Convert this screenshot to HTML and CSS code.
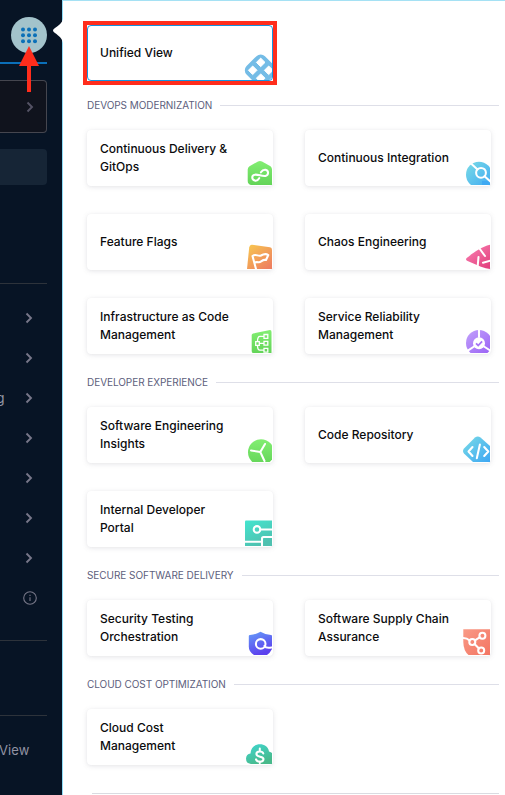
FILE: index.html
```
<!DOCTYPE html>
<html lang="en">
<head>
<meta charset="utf-8">
<title>Modules</title>
<link rel="stylesheet" href="styles.css">
</head>
<body>
<div class="app">
  <aside class="sidebar">
    <div class="launcher">
      <svg width="36" height="36" viewBox="0 0 36 36"><circle cx="18" cy="18" r="18" fill="#a3c3cb"/><g fill="#0b70b8"><circle cx="12" cy="12.5" r="2"/><circle cx="18" cy="12.5" r="2"/><circle cx="24" cy="12.5" r="2"/><circle cx="12" cy="18.3" r="2"/><circle cx="18" cy="18.3" r="2"/><circle cx="24" cy="18.3" r="2"/><circle cx="12" cy="24.2" r="2"/><circle cx="18" cy="24.2" r="2"/><circle cx="24" cy="24.2" r="2"/></g></svg>
    </div>
    <div class="project"><svg class="chev" viewBox="0 0 8 12"><path d="M1.5 1.5 6 6 1.5 10.5"/></svg></div>
    <div class="active"></div>
    <nav class="nav">
      <div class="item"><svg class="chev" viewBox="0 0 8 12"><path d="M1.5 1.5 6 6 1.5 10.5"/></svg></div>
      <div class="item"><svg class="chev" viewBox="0 0 8 12"><path d="M1.5 1.5 6 6 1.5 10.5"/></svg></div>
      <div class="item"><span class="label">g</span><svg class="chev" viewBox="0 0 8 12"><path d="M1.5 1.5 6 6 1.5 10.5"/></svg></div>
      <div class="item"><svg class="chev" viewBox="0 0 8 12"><path d="M1.5 1.5 6 6 1.5 10.5"/></svg></div>
      <div class="item"><svg class="chev" viewBox="0 0 8 12"><path d="M1.5 1.5 6 6 1.5 10.5"/></svg></div>
      <div class="item"><svg class="chev" viewBox="0 0 8 12"><path d="M1.5 1.5 6 6 1.5 10.5"/></svg></div>
      <div class="item"><svg class="chev" viewBox="0 0 8 12"><path d="M1.5 1.5 6 6 1.5 10.5"/></svg></div>
      <div class="item"><svg class="info" viewBox="0 0 14 14"><circle cx="7" cy="7" r="6.3"/><path d="M7 6.2V10M7 3.8V5"/></svg></div>
    </nav>
    <div class="blank"></div>
    <div class="view"><span>View</span></div>
    <svg class="arrow" viewBox="0 0 20 46"><path d="M10 0 20 20H12V46H8V20H0Z" fill="#ff2d1c"/></svg>
    <svg class="notch" viewBox="0 0 11 24"><path d="M11 0C10 4 7 6 3 9Q-1 11.500 3 14C7 17 10 19 11 24Z" fill="#fff"/></svg>
  </aside>
  <main class="panel">
    <div class="card unified"><span>Unified View</span>
      <svg class="icon" viewBox="0 0 29 29"><rect x="4.700" y="6.300" width="26" height="26" rx="6" transform="rotate(45 17.700 19.300)" fill="#74bce6"/><g fill="#fff" stroke="#fff" stroke-width="1" stroke-linejoin="round"><path d="m17.700 7.100 4.300 4.300-4.300 4.300-4.300-4.300ZM9.700 15l4.300 4.300-4.300 4.300-4.300-4.300ZM25.700 15l4.300 4.300-4.300 4.300-4.300-4.300ZM17.700 22.900l4.300 4.300-4.300 4.300-4.300-4.300Z"/></g></svg>
    </div>

    <h2 class="heading">DEVOPS MODERNIZATION</h2>
    <section class="grid">
      <div class="card"><span>Continuous Delivery &amp;<br>GitOps</span>
        <svg class="icon" viewBox="0 0 29 29"><defs><linearGradient id="green" x2="0" y2="1"><stop stop-color="#82ee72"/><stop offset="1" stop-color="#63d458"/></linearGradient></defs><path d="M15 5.500Q17 4.300 19 5.500L27.500 10.200Q29 11.500 29 13.500V29H8Q4.700 28 4.700 25V13.500Q4.700 11.500 6.500 10.200Z" fill="url(#green)"/><path class="line" d="M16.200 22.200C14.800 24.500 13.200 25 11.800 24.600 8.500 23.800 8.400 19.300 11.700 18.700 15 18 19 20.600 22.500 19.900 26 19 25.800 14.300 22.500 13.700 20.300 13.400 19 14.600 17.900 16.300"/></svg></div>
      <div class="card"><span>Continuous Integration</span>
        <svg class="icon" viewBox="0 0 29 29"><defs><linearGradient id="blue" x2="1" y2="1"><stop stop-color="#7adce6"/><stop offset="1" stop-color="#3ea7f3"/></linearGradient></defs><circle cx="18" cy="18.700" r="13" fill="url(#blue)"/><path d="M21 25H29V29H21Z" fill="#3fa9f2"/><circle class="line" cx="20" cy="16.800" r="4.900"/><path class="line" d="M10 7.500 16.500 13.500M23.500 20.200 30 26"/></svg></div>
      <div class="card"><span>Feature Flags</span>
        <svg class="icon" viewBox="0 0 29 29"><defs><linearGradient id="orange" x2=".8" y2="1"><stop stop-color="#f8c94f"/><stop offset="1" stop-color="#ee8060"/></linearGradient></defs><path d="M9 4.800 27 7.300Q29 7.600 29 10V29H4L6.200 7.500Q6.700 4.500 9 4.800Z" fill="url(#orange)"/><path class="line" d="M13 29 9.500 16C13 13 15 17 18 15.500 20.500 14 23 13.500 25.300 15L23 20C19 19 18.500 22.500 15.500 22.200 13.500 22 12.500 22 11.500 22.500"/></svg></div>
      <div class="card"><span>Chaos Engineering</span>
        <svg class="icon" viewBox="0 0 29 29"><defs><linearGradient id="pink" x2=".8" y2="1"><stop stop-color="#fb83b5"/><stop offset="1" stop-color="#e3437f"/></linearGradient></defs><path d="M29 4.800V29Q25 28.500 20 26.700L6 20.700Q4 19.200 6 17.700C12 13 20 7 29 4.800Z" fill="url(#pink)"/><path class="line" d="M18.500 8.500 24 16M17.500 17 16.500 28M22 22.700 30 20.500"/></svg></div>
      <div class="card"><span>Infrastructure as Code<br>Management</span>
        <svg class="icon" viewBox="0 0 29 29"><path d="M10 9.500 27 6Q28.500 6 28.500 8V29H10Q8.700 29 8.700 27V11Q8.700 10 10 9.500Z" fill="url(#green)"/><path class="thin" d="M12.700 17.700h3.600v3.600h-3.600ZM21 10.500h3.800v3.800H21ZM21 17.400h3.800v3.800H21ZM21 24.300h3.800v3.800H21ZM16.300 19.400H21M21 12.400H17Q14.500 12.400 14.500 17.700M14.500 21.300Q14.500 26.200 17 26.200H21"/></svg></div>
      <div class="card"><span>Service Reliability<br>Management</span>
        <svg class="icon" viewBox="0 0 29 29"><defs><linearGradient id="purple" x2=".8" y2="1"><stop stop-color="#c2a2fb"/><stop offset="1" stop-color="#9b63f5"/></linearGradient></defs><circle cx="18" cy="19" r="13" fill="url(#purple)"/><path class="line" d="M18 5V13M13 22.500 6.500 26.800M23 22.500 30 27"/><circle cx="18" cy="19.200" r="6" fill="#fff"/><path d="m15 19.300 2.200 2.200 3.900-4.200" fill="none" stroke="#a875f6" stroke-width="1.800"/></svg></div>
    </section>

    <h2 class="heading">DEVELOPER EXPERIENCE</h2>
    <section class="grid">
      <div class="card"><span>Software Engineering<br>Insights</span>
        <svg class="icon" viewBox="0 0 29 29"><circle cx="18" cy="19.300" r="13" fill="url(#green)"/><path class="line" d="M22 11 17.300 19 8 17.500M17.300 19 21.500 28"/></svg></div>
      <div class="card"><span>Code Repository</span>
        <svg class="icon" viewBox="0 0 29 29"><path d="M14 4.500Q16.700 2.500 19.500 4.500L29 13V29H12L3 20.500Q1 18 3 15.500Z" fill="url(#blue)"/><path class="line" d="M11.500 14 7.500 18.500 11.500 23M23.200 14 27.300 18.500 23.200 23M18.900 11.500 15.800 25.300"/></svg></div>
      <div class="card"><span>Internal Developer<br>Portal</span>
        <svg class="icon" viewBox="0 0 29 29"><defs><linearGradient id="teal" x2=".5" y2="1"><stop stop-color="#43e5cf"/><stop offset="1" stop-color="#4fc1b0"/></linearGradient></defs><path d="M3 3.500H29V29H2V4.500Q2 3.500 3 3.500Z" fill="url(#teal)"/><circle class="line" cx="14" cy="12.400" r="3.300"/><path class="line" d="M17.500 12.400H29M2 24.700H17.500M29 20H20.500Q19 20 19 21.500V29"/></svg></div>
    </section>

    <h2 class="heading">SECURE SOFTWARE DELIVERY</h2>
    <section class="grid">
      <div class="card"><span>Security Testing<br>Orchestration</span>
        <svg class="icon" viewBox="0 0 29 29"><defs><linearGradient id="indigo" x2=".4" y2="1"><stop stop-color="#659df8"/><stop offset="1" stop-color="#5b40ee"/></linearGradient></defs><path d="M17.500 5.800Q22 8.700 28 9 29 9 29 10V23Q27 27 24 29H11Q5.500 26 5.800 20V10Q5.800 9.200 7 9 13 8.500 17.500 5.800Z" fill="url(#indigo)"/><circle class="line" cx="17.700" cy="17.900" r="4.800"/><path class="line" d="M21.500 20Q23 22.500 28.500 21.500"/></svg></div>
      <div class="card"><span>Software Supply Chain<br>Assurance</span>
        <svg class="icon" viewBox="0 0 29 29"><defs><linearGradient id="coral" x2="1" y2="1"><stop stop-color="#f99a86"/><stop offset="1" stop-color="#f37563"/></linearGradient></defs><path d="M2.300 3.300H29V29H7.500Q2.500 25 2.300 16Z" fill="url(#coral)"/><g class="line"><circle cx="11.300" cy="16" r="3"/><circle cx="21.400" cy="9.800" r="3"/><circle cx="20.200" cy="24.500" r="3"/><path d="M2.300 12Q6 12 8.700 14.500M14 14.300 18.600 11.400M13.500 18 18 22.500"/></g></svg></div>
    </section>

    <h2 class="heading">CLOUD COST OPTIMIZATION</h2>
    <section class="grid">
      <div class="card"><span>Cloud Cost<br>Management</span>
        <svg class="icon" viewBox="0 0 29 29"><defs><linearGradient id="cloud" x2=".5" y2="1"><stop stop-color="#3fd7d1"/><stop offset="1" stop-color="#48b98b"/></linearGradient></defs><path d="M8 29Q3 28.500 3 23.500 3.300 19.200 7.500 18.500C8 6.500 24.500 6.500 26 16.500Q28 17 29 18V29Z" fill="url(#cloud)"/><path class="line" d="M20.300 18.500C19.300 15.500 13.400 15.800 13.400 19 13.400 22.500 20.500 20.800 20.500 24 20.500 27.500 14 27.500 13 24.400M16.800 13.500V16.500M16.800 26.500V28"/></svg></div>
    </section>
    <div class="end"></div>
  </main>
</div>
</body>
</html>
```

FILE: styles.css
```
* { box-sizing: border-box; }
body { margin: 0; background: #fff; font-family: Inter, "Liberation Sans", sans-serif; overflow: hidden; }
.app { display: flex; width: 505px; height: 795px; }

.sidebar { position: relative; flex: none; width: 62px; height: 795px; padding-right: 15px; background: #071425; display: flex; flex-direction: column; }
.launcher { height: 64px; padding: 17px 0 0 11px; border-bottom: 2px solid #0b6fb8; flex: none; }
.launcher svg { display: block; }
.project { height: 53px; flex: none; margin-top: 16px; border: 1px solid #45464f; border-left: 0; border-radius: 0 4px 4px 0; background: #10131d; display: flex; align-items: center; justify-content: flex-end; padding-right: 12px; }
.active { height: 36px; flex: none; margin-top: 16px; border-radius: 0 4px 4px 0; background: #162536; }
.nav { margin-top: 98px; border-top: 1px solid #2d333b; border-bottom: 1px solid #2d333b; height: 358px; flex: none; padding-top: 13.5px; }
.item { height: 40px; display: flex; align-items: center; justify-content: flex-end; padding-right: 14px; color: #9293a3; font-size: 14px; }
.label { margin-right: auto; margin-left: -4px; }
.item:last-child { padding-right: 10px; }
.chev { width: 8px; height: 12px; fill: none; stroke: #777789; stroke-width: 1.900; }
.project .chev { stroke: #555365; }
.info { width: 14px; height: 14px; fill: none; stroke: #777788; stroke-width: 1.100; }
.blank { height: 75px; flex: none; border-bottom: 1px solid #2d333b; }
.view { height: 68px; display: flex; align-items: center; color: #9293a3; font-size: 13px; letter-spacing: .1px; }
.view span { margin-left: -1px; }
.arrow { position: absolute; left: 19px; top: 46px; width: 20px; height: 46px; }
.notch { position: absolute; right: -1px; top: 19px; width: 11px; height: 24px; z-index: 1; }

.panel { flex: 1; border-left: 1px solid #8edcf7; border-top: 1px solid #a5e1f4; padding: 24px 6px 0 24px; }
.card { position: relative; width: 186px; height: 56px; padding: 0 13px; display: flex; align-items: center; border-radius: 4px; background: #fff; box-shadow: 0 0 1px rgba(40, 41, 61, .05), 0 1px 5px rgba(96, 97, 112, .17); color: #0b0b0d; font-size: 12px; font-weight: 500; line-height: 18px; white-space: nowrap; }
.unified { border: 1px solid #1593df; padding: 0 12px; box-shadow: none; }
.unified::before { content: ""; position: absolute; inset: -5px; border: 4px solid #ff2d1c; }
.icon { position: absolute; right: 1px; bottom: 1px; width: 29px; height: 29px; overflow: hidden; }
.unified .icon { right: 0; bottom: 0; }
.line { fill: none; stroke: #fff; stroke-width: 2.050; stroke-linecap: round; stroke-linejoin: round; }
.thin { fill: none; stroke: #fff; stroke-width: 1.300; }
.grid { display: grid; grid-template-columns: 186px 186px; gap: 28px 32px; }
.heading { display: flex; align-items: center; gap: 8px; height: 14px; margin: 21px 0 18px; color: #5d5e7c; font-size: 10px; font-weight: 400; line-height: 14px; letter-spacing: -.05px; white-space: nowrap; }
.unified + .heading { margin-top: 17px; }
.heading::after { content: ""; flex: 1; height: 1px; background: #dedfe8; }
.end { height: 1px; margin: 28px 0 0 5px; background: #dadbe1; }
```
